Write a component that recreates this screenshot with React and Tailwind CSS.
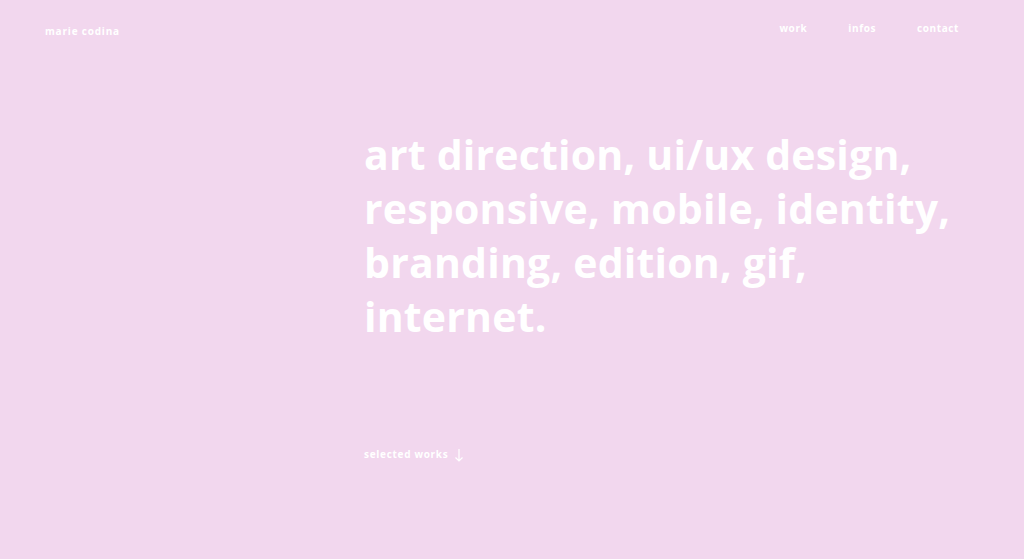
import React from 'react';

const App = () => {
  return (
    <div
      className="w-full h-[559px] bg-[#f2d7ee] text-white overflow-hidden flex flex-col"
      style={{ fontFamily: '"Open Sans", "Liberation Sans", sans-serif' }}
    >
      {/* Header */}
      <header className="flex items-start justify-between pl-[45px] pr-[65px] pt-[23px]">
        <a className="text-[10px] font-bold tracking-[0.08em] leading-none mt-[3px]">marie codina</a>
        <nav className="flex gap-[41px] text-[10px] font-bold tracking-[0.06em] leading-none">
          <a>work</a>
          <a>infos</a>
          <a>contact</a>
        </nav>
      </header>

      {/* Intro */}
      <main className="pl-[364px] pt-[91px]">
        <h1 className="text-[41px] font-bold leading-[54px] tracking-[0.005em]">
          art direction, ui/ux design,<br />
          responsive, mobile, identity,<br />
          branding, edition, gif,<br />
          internet.
        </h1>
        <div className="mt-[104px] flex items-center gap-[6px] text-[10px] font-bold tracking-[0.07em]">
          <span>selected works</span>
          <svg width="10" height="14" viewBox="0 0 10 14" fill="none" stroke="currentColor" strokeWidth="1.2">
            <path d="M5 1v12M1.5 9.5L5 13l3.5-3.5" />
          </svg>
        </div>
      </main>
    </div>
  );
};

export default App;
